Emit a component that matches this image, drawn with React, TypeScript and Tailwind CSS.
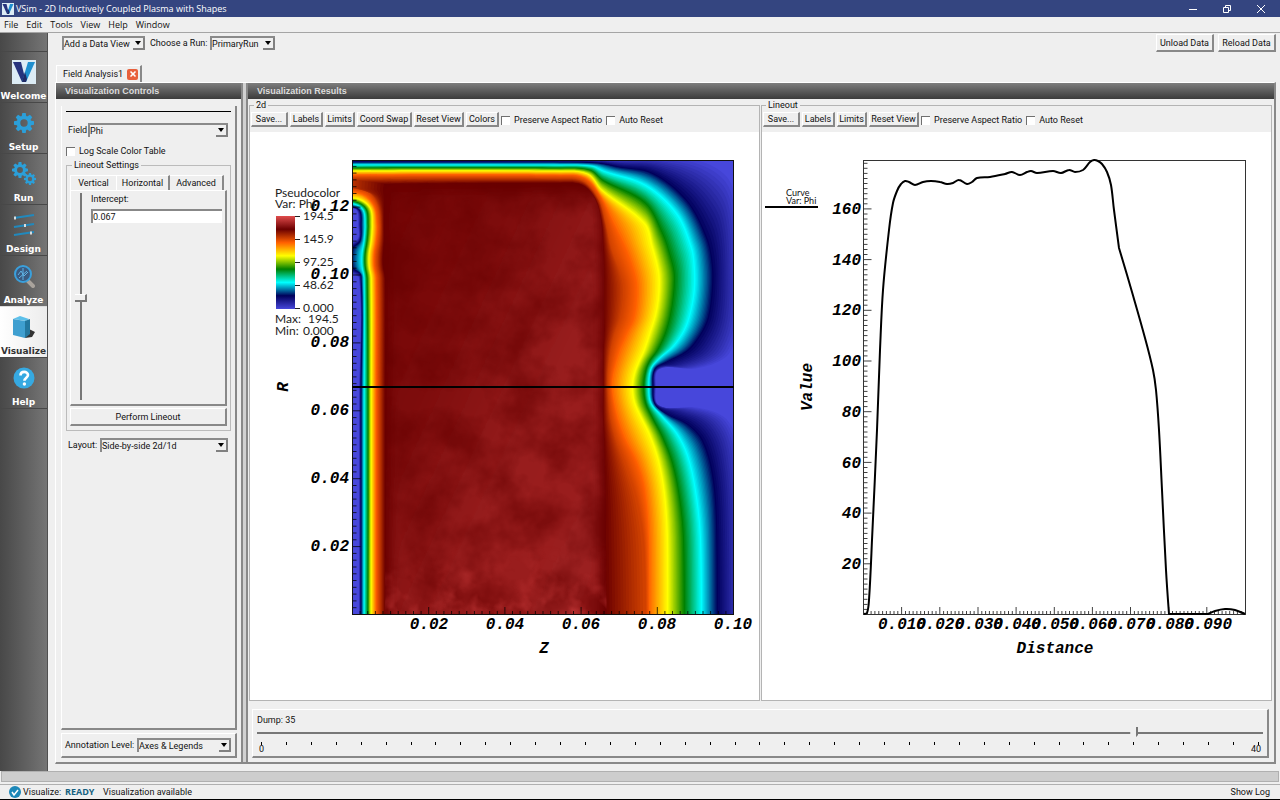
import type { ReactNode } from "react";
import clsx from "clsx";
import { X } from "lucide-react";

type Point = [number, number];
type Rgb = [number, number, number];

/* "hot desaturated" colour table */
const COLOR_TABLE: Rgb[] = [
  [71, 71, 219],
  [0, 0, 91],
  [0, 255, 255],
  [0, 128, 0],
  [255, 255, 0],
  [255, 96, 0],
  [107, 0, 0],
  [224, 76, 76],
];

function colorAt(value: number) {
  const position = value * (COLOR_TABLE.length - 1);
  const index = Math.min(Math.floor(position), COLOR_TABLE.length - 2);
  const t = position - index;
  const rgb = COLOR_TABLE[index].map((c, i) =>
    Math.round(c + (COLOR_TABLE[index + 1][i] - c) * t),
  );
  return `rgb(${rgb.join(",")})`;
}

/* Isolines of Phi, all with the same number of points so they can be blended */
const CONTOURS: { value: number; points: Point[] }[] = [
  {
    value: 0,
    points: [
      [340, 160], [560, 160], [600, 159], [620, 158], [660, 156], [700, 158], [728, 172], [738, 200],
      [742, 280], [742, 315], [738, 340], [728, 358], [698, 369], [660, 369], [656, 387], [660, 406],
      [698, 407], [726, 416], [738, 436], [742, 470], [744, 520], [744, 640],
      [359, 640], [359, 400], [359, 279], [347, 271], [347, 246], [358, 238], [358, 225], [357, 211],
      [352, 208], [340, 208],
    ],
  },
  {
    value: 1 / 7,
    points: [
      [340, 162], [560, 162], [598, 163], [620, 167], [653, 173], [687, 200], [707, 237], [713, 265],
      [713, 290], [709, 318], [701, 335], [688, 351], [667, 362], [655, 369], [653, 387], [655, 404],
      [667, 414], [688, 424], [703, 440], [713, 473], [717, 520], [718, 640],
      [361, 640], [361, 400], [361, 275], [352, 267], [352, 249], [360, 241], [361, 225], [360, 211],
      [353, 207], [340, 207],
    ],
  },
  {
    value: 2 / 7,
    points: [
      [340, 165], [560, 165], [592, 166], [604, 171], [646, 185], [677, 213], [692, 247], [695, 268],
      [695, 290], [691, 313], [685, 330], [674, 346], [660, 358], [651, 369], [649, 387], [651, 403],
      [662, 416], [677, 433], [688, 455], [696, 490], [701, 537], [702, 640],
      [364, 640], [364, 400], [364, 278], [362, 266], [362, 254], [364, 241], [365, 225], [363, 210],
      [354, 204], [340, 204],
    ],
  },
  {
    value: 3 / 7,
    points: [
      [340, 168], [560, 168], [590, 170], [603, 180], [645, 202], [663, 233], [672, 260], [675, 275],
      [674, 295], [671, 315], [666, 333], [658, 350], [650, 361], [646, 371], [644, 387], [646, 403],
      [653, 418], [663, 437], [673, 463], [680, 497], [684, 537], [685, 640],
      [368, 640], [368, 400], [367, 278], [365, 266], [365, 254], [367, 241], [368, 225], [366, 209],
      [356, 202], [340, 201],
    ],
  },
  {
    value: 4 / 7,
    points: [
      [340, 171], [560, 171], [588, 174], [602, 190], [645, 223], [653, 247], [659, 270], [660, 283],
      [659, 300], [656, 316], [651, 332], [645, 350], [639, 363], [635, 374], [633, 387], [635, 402],
      [641, 416], [650, 434], [659, 460], [665, 493], [668, 537], [668, 640],
      [371, 640], [371, 400], [371, 278], [369, 266], [369, 254], [371, 241], [372, 225], [370, 208],
      [358, 199], [340, 198],
    ],
  },
  {
    value: 5 / 7,
    points: [
      [340, 175], [560, 175], [585, 178], [601, 197], [614, 223], [626, 248], [634, 270], [637, 283],
      [637, 300], [634, 319], [627, 334], [620, 350], [616, 363], [613, 375], [612, 387], [614, 402],
      [618, 419], [625, 438], [637, 462], [645, 490], [649, 537], [649, 640],
      [376, 640], [376, 400], [376, 278], [374, 266], [374, 254], [376, 241], [377, 225], [374, 206],
      [362, 194], [340, 192],
    ],
  },
  {
    value: 0.76,
    points: [
      [340, 178], [560, 178], [583, 181], [599, 200], [606, 224], [612, 250], [620, 270], [624, 284],
      [624, 300], [621, 318], [615, 334], [611, 350], [609, 363], [608, 375], [608, 387], [609, 402],
      [611, 419], [616, 438], [626, 465], [637, 500], [644, 545], [646, 640],
      [379, 640], [379, 400], [379, 278], [377, 266], [377, 254], [379, 241], [380, 225], [377, 204],
      [366, 191], [340, 187],
    ],
  },
  {
    value: 6 / 7,
    points: [
      [384, 184], [560, 183], [582, 185], [595, 199], [601, 220], [603, 245], [604, 268], [604, 285],
      [604, 300], [604, 318], [604, 334], [603, 350], [603, 363], [603, 375], [603, 387], [603, 402],
      [603, 419], [604, 438], [605, 465], [606, 500], [606, 545], [607, 640],
      [385, 640], [385, 400], [385, 278], [383, 266], [383, 254], [384, 241], [384, 225], [384, 210],
      [384, 200], [383, 190],
    ],
  },
];

/* Points where an isoline leaves the plot */
const CONTOUR_CORNERS = [0, 21, 22, 31];

const LINEOUT: Point[] = [
  [864, 614], [867, 613], [869, 600], [872, 540], [877, 430], [880, 350], [883, 290], [889, 230],
  [893, 203], [897, 191], [901, 184], [905, 181], [909, 182], [915, 185], [923, 182], [931, 181],
  [940, 182], [947, 184], [953, 183], [959, 180], [967, 184], [972, 182], [977, 178], [990, 177],
  [1005, 174], [1012, 172], [1020, 175], [1027, 172], [1031, 171], [1037, 173], [1053, 171],
  [1061, 173], [1069, 170], [1075, 172], [1083, 170], [1090, 162], [1094, 160], [1098, 161],
  [1102, 164], [1107, 172], [1111, 185], [1114, 210], [1119, 248], [1132, 292], [1145, 338],
  [1153, 370], [1156, 390], [1159, 430], [1162, 490], [1166, 570], [1169, 614], [1208, 614],
  [1215, 611], [1225, 609], [1235, 610], [1245, 614],
];

const LINEOUT_CORNERS = [1119, 1169, 1208].map((x) => LINEOUT.findIndex((p) => p[0] === x));

function smoothPath(points: Point[], closed: boolean, corners: number[]) {
  const n = points.length;
  const at = (i: number) =>
    closed ? points[(i + n) % n] : points[Math.max(0, Math.min(n - 1, i))];
  const tangent = (i: number): Point => {
    if (corners.includes(i)) return [0, 0];
    const [ax, ay] = at(i - 1);
    const [bx, by] = at(i + 1);
    const length = Math.hypot(bx - ax, by - ay) || 1;
    return [(bx - ax) / length, (by - ay) / length];
  };

  let d = `M${points[0].join(" ")}`;
  for (let i = 0; i < (closed ? n : n - 1); i++) {
    const [px, py] = at(i);
    const [qx, qy] = at(i + 1);
    const reach = Math.hypot(qx - px, qy - py) / 3;
    const [tx, ty] = tangent(i);
    const [ux, uy] = tangent(closed ? (i + 1) % n : i + 1);
    const nums = [px + tx * reach, py + ty * reach, qx - ux * reach, qy - uy * reach, qx, qy];
    d += `C${nums.map((v) => v.toFixed(1)).join(" ")}`;
  }
  return closed ? `${d}Z` : d;
}

const STEPS = 14;

const BANDS = CONTOURS.slice(0, -1).flatMap((from, i) => {
  const to = CONTOURS[i + 1];
  return Array.from({ length: STEPS }, (_, s) => {
    const t = (s + 1) / STEPS;
    const points = from.points.map(([x, y], k): Point => [
      x + (to.points[k][0] - x) * t,
      y + (to.points[k][1] - y) * t,
    ]);
    return {
      d: smoothPath(points, true, CONTOUR_CORNERS),
      fill: colorAt(from.value + (to.value - from.value) * t),
    };
  });
});

const CORE = BANDS[BANDS.length - 1].d;

function ticks(count: number, horizontal: boolean, origin: number, step: number) {
  let d = "";
  for (let i = 1; i <= count; i++) {
    const size = i % 10 === 0 ? 8 : 4;
    d += horizontal
      ? `M${(origin + i * step).toFixed(1)} 615v${-size}`
      : `M${origin} ${(614.5 - i * step).toFixed(1)}h${size}`;
  }
  return d;
}

const axisText = "font-['Liberation_Mono',monospace] text-[16px] font-bold italic";

function FieldPlot() {
  return (
    <svg viewBox="250 132 509 568" className="block h-auto w-full" role="img" aria-label="Phi pseudocolor plot">
      <defs>
        <clipPath id="plot-area">
          <rect x="352" y="160" width="382" height="455" />
        </clipPath>
        <clipPath id="plasma-core">
          <path d={CORE} />
        </clipPath>
        <linearGradient id="color-bar" x1="0" y1="1" x2="0" y2="0">
          {COLOR_TABLE.map((_, i) => (
            <stop key={i} offset={i / 7} stopColor={colorAt(i / 7)} />
          ))}
        </linearGradient>
        <linearGradient id="core-glow" x1="0" y1="0" x2="1" y2="1">
          <stop offset="0" stopColor="#e04c4c" stopOpacity="0.06" />
          <stop offset="0.3" stopColor="#e04c4c" stopOpacity="0.16" />
          <stop offset="0.6" stopColor="#e04c4c" stopOpacity="0.38" />
          <stop offset="1" stopColor="#e04c4c" stopOpacity="0.42" />
        </linearGradient>
        <linearGradient id="speckle-fade" x1="0" y1="0" x2="0" y2="1">
          <stop offset="0" stopColor="#fff" stopOpacity="0" />
          <stop offset="1" stopColor="#fff" stopOpacity="1" />
        </linearGradient>
        <filter id="soft" x="-10%" y="-10%" width="120%" height="120%">
          <feGaussianBlur stdDeviation="5" />
        </filter>
        <filter id="mottle" colorInterpolationFilters="sRGB">
          <feTurbulence type="fractalNoise" baseFrequency="0.024" numOctaves="4" seed="8" />
          <feColorMatrix values="0 0 0 0 0.4  0 0 0 0 0  0 0 0 0 0  2.4 0 0 0 -0.85" />
          <feComposite in2="SourceGraphic" operator="in" />
        </filter>
        <filter id="speckle" colorInterpolationFilters="sRGB">
          <feTurbulence type="fractalNoise" baseFrequency="0.05" numOctaves="3" seed="3" />
          <feColorMatrix values="0 0 0 0 0.86  0 0 0 0 0.28  0 0 0 0 0.28  2.6 0 0 0 -1.2" />
          <feComposite in2="SourceGraphic" operator="in" />
        </filter>
      </defs>

      <g clipPath="url(#plot-area)">
        <rect x="352" y="160" width="382" height="455" fill={colorAt(0)} />
        {BANDS.map((band, i) => (
          <path key={i} d={band.d} fill={band.fill} />
        ))}
        <g clipPath="url(#plasma-core)">
          <rect x="391" y="192" width="209" height="450" fill="url(#core-glow)" filter="url(#soft)" />
          <rect x="380" y="180" width="232" height="440" fill="#fff" filter="url(#mottle)" opacity="0.55" />
          <rect x="380" y="545" width="232" height="75" fill="url(#speckle-fade)" filter="url(#speckle)" opacity="0.5" />
        </g>
      </g>

      <path
        d={ticks(50, true, 352.5, 7.62) + ticks(66, false, 352.5, 6.79)}
        stroke="#000"
        strokeOpacity="0.75"
        fill="none"
      />
      <rect x="352.5" y="160.5" width="381" height="454" fill="none" stroke="#111" />
      <path d="M352 387H734" stroke="#000" strokeWidth="2" />

      <g className={axisText}>
        {["0.02", "0.04", "0.06", "0.08", "0.10", "0.12"].map((label, i) => (
          <text key={label} x="349" y={551 - i * 68} textAnchor="end">
            {label}
          </text>
        ))}
        {["0.02", "0.04", "0.06", "0.08", "0.10"].map((label, i) => (
          <text key={label} x={429 + i * 76} y="629" textAnchor="middle">
            {label}
          </text>
        ))}
        <text x="544" y="653" textAnchor="middle">Z</text>
        <text transform="translate(288 387) rotate(-90)" textAnchor="middle">R</text>
      </g>

      <g className="font-['Lato',sans-serif] text-[12px]" fill="#222">
        <text x="275" y="197">Pseudocolor</text>
        <text x="275" y="208">Var: Phi</text>
        <rect x="276" y="216" width="19" height="93" fill="url(#color-bar)" />
        <path d="M295 216.5h5M295 239.5h5M295 262.5h5M295 285.5h5M295 308.5h5" stroke="#222" />
        {["194.5", "145.9", "97.25", "48.62", "0.000"].map((label, i) => (
          <text key={label} x="303" y={220 + i * 23}>
            {label}
          </text>
        ))}
        <text x="275" y="323">Max:</text>
        <text x="308" y="323">194.5</text>
        <text x="275" y="335">Min:</text>
        <text x="303" y="335">0.000</text>
      </g>
    </svg>
  );
}

function LineoutPlot() {
  return (
    <svg viewBox="762 132 509 568" className="block h-auto w-full" role="img" aria-label="Phi lineout curve">
      <path
        d={ticks(99, true, 863.5, 3.815) + ticks(89, false, 863.5, 5.07)}
        stroke="#000"
        strokeOpacity="0.75"
        fill="none"
      />
      <rect x="863.5" y="160.5" width="382" height="454" fill="none" stroke="#333" />
      <path
        d={smoothPath(LINEOUT, false, LINEOUT_CORNERS)}
        fill="none"
        stroke="#000"
        strokeWidth="2"
        strokeLinejoin="round"
      />

      <g className={axisText}>
        {[20, 40, 60, 80, 100, 120, 140, 160].map((label, i) => (
          <text key={label} x="861" y={569 - Math.round(i * 50.7)} textAnchor="end">
            {label}
          </text>
        ))}
        {[1, 2, 3, 4, 5, 6, 7, 8, 9].map((n) => (
          <text key={n} x={864 + Math.round(n * 38.2)} y="629" textAnchor="middle">
            {`0.0${n}0`}
          </text>
        ))}
        <text x="1055" y="653" textAnchor="middle">Distance</text>
        <text transform="translate(812 387) rotate(-90)" textAnchor="middle">Value</text>
      </g>

      <g className="font-['Lato',sans-serif] text-[9px]" fill="#111">
        <text x="786" y="196">Curve</text>
        <text x="786" y="204">Var: Phi</text>
      </g>
      <path d="M765 207H818" stroke="#000" strokeWidth="2" />
    </svg>
  );
}

function Gear({ cx, cy, r }: { cx: number; cy: number; r: number }) {
  return (
    <g transform={`translate(${cx} ${cy})`} fill="#2b9fd9">
      {[0, 45, 90, 135, 180, 225, 270, 315].map((angle) => (
        <path
          key={angle}
          transform={`rotate(${angle})`}
          d={`M${-r * 0.24} ${-r * 0.6}L${-r * 0.17} ${-r}H${r * 0.17}L${r * 0.24} ${-r * 0.6}Z`}
        />
      ))}
      <circle r={r * 0.55} fill="none" stroke="#2b9fd9" strokeWidth={r * 0.36} />
    </g>
  );
}

function VLogo({ className }: { className: string }) {
  return (
    <svg viewBox="0 0 24 24" className={className} aria-hidden="true">
      <rect width="24" height="24" fill="#dcecf5" />
      <path d="M1 2h8l5 20h-4z" fill="#26337d" />
      <path d="M23 2h-7l-6 20h4z" fill="#1e8fcf" />
      <path d="M10 22l3-10 2 7-1 3z" fill="#202a66" />
    </svg>
  );
}

const navItems: { label: string; icon: ReactNode; active?: boolean }[] = [
  { label: "Welcome", icon: <VLogo className="size-6" /> },
  {
    label: "Setup",
    icon: (
      <svg viewBox="0 0 24 24" className="size-6">
        <Gear cx={12} cy={12} r={10} />
      </svg>
    ),
  },
  {
    label: "Run",
    icon: (
      <svg viewBox="0 0 24 24" className="size-6">
        <Gear cx={8} cy={8} r={8} />
        <Gear cx={18} cy={17} r={6} />
      </svg>
    ),
  },
  {
    label: "Design",
    icon: (
      <svg viewBox="0 0 24 24" className="size-6" stroke="#2189bd" strokeWidth="2">
        <path d="M2 5l20-3M2 14l20-3M2 22l20-3" />
        <path d="M2 5h2M12 12.500h2M18 20h2" stroke="#d7dde0" strokeWidth="3" />
      </svg>
    ),
  },
  {
    label: "Analyze",
    icon: (
      <svg viewBox="0 0 24 24" className="size-6">
        <path d="M15 16l6 6" stroke="#a9a39c" strokeWidth="4" strokeLinecap="round" />
        <circle cx="11" cy="10" r="8" fill="#3b5a80" stroke="#3aa0dc" strokeWidth="2" />
        <path d="M6 11l3-4 3 5 4-4M7 14l8-7M11 4v12" stroke="#5fb3e6" strokeWidth="1" fill="none" />
      </svg>
    ),
  },
  {
    label: "Visualize",
    active: true,
    icon: (
      <svg viewBox="0 0 24 24" className="size-6">
        <path d="M13 23l7-1 3-5-6-3z" fill="#333" />
        <path d="M1 4l7-3 9 3-3 2z" fill="#5cc0ea" />
        <path d="M1 4l12 2v17L1 20z" fill="#3f9fd0" />
        <path d="M13 6l5-2v15l-5 4z" fill="#23779f" />
      </svg>
    ),
  },
  {
    label: "Help",
    icon: (
      <svg viewBox="0 0 24 24" className="size-6">
        <circle cx="12" cy="12" r="10.500" fill="#36a9e1" />
        <path
          d="M8.500 9.500c0-5 7.500-4.500 7.500-.5 0 2.600-3.600 2.800-3.600 5.800"
          fill="none"
          stroke="#fff"
          strokeWidth="2.600"
        />
        <circle cx="12.400" cy="18" r="1.700" fill="#fff" />
      </svg>
    ),
  },
];

function Sidebar() {
  return (
    <nav className="w-12 shrink-0 border-r border-[#505050] bg-linear-to-r from-[#484848] to-[#757575] pt-[18px]">
      {navItems.map(({ label, icon, active }) => (
        <button
          key={label}
          type="button"
          className={clsx(
            "flex h-[51px] w-full flex-col items-center border-t pt-2 font-['DejaVu_Sans',sans-serif] text-[9px] leading-3 font-bold",
            active
              ? "border-[#ddd] bg-linear-to-r from-white to-[#ececec] text-[#333]"
              : "border-[#484848] text-white",
          )}
        >
          {icon}
          <span className="mt-[6px]">{label}</span>
        </button>
      ))}
      <div className="border-t border-[#484848]" />
    </nav>
  );
}

function Select({ id, value, className }: { id: string; value: string; className: string }) {
  return (
    <span className={clsx("relative flex h-[14px]", className)}>
      <select
        id={id}
        aria-label={value}
        defaultValue={value}
        className="w-full appearance-none border-t-2 border-l-2 border-[#8a8a8a] bg-[#efefef] leading-3 outline-none"
      >
        <option>{value}</option>
      </select>
      <span className="pointer-events-none absolute top-[2px] right-0 bottom-0 flex w-3 items-center justify-center border-r-2 border-b-2 border-[#808080]">
        <svg viewBox="0 0 6 4" className="h-1 w-[6px]">
          <path d="M0 0h6L3 4z" fill="#000" />
        </svg>
      </span>
    </span>
  );
}

function PushButton({ children, className }: { children: ReactNode; className?: string }) {
  return (
    <button
      type="button"
      className={clsx(
        "border-t border-r-2 border-b-2 border-l border-t-white border-r-[#888] border-b-[#888] border-l-white bg-[#efefef] text-center leading-3 whitespace-nowrap",
        className,
      )}
    >
      {children}
    </button>
  );
}

function CheckBox({ id, label }: { id: string; label: string }) {
  return (
    <span className="flex items-center gap-1">
      <input
        id={id}
        type="checkbox"
        className="size-[9px] appearance-none border-t border-l border-[#707070] bg-white checked:bg-gray-500"
      />
      <label htmlFor={id} className="whitespace-nowrap">
        {label}
      </label>
    </span>
  );
}

function PanelHeader({ children }: { children: ReactNode }) {
  return (
    <h2 className="h-4 bg-linear-to-b from-[#7e7e7e] to-[#3c3c3c] pl-[9px] font-['Liberation_Sans',sans-serif] text-[9px] leading-4 font-bold text-[#dcdcdc]">
      {children}
    </h2>
  );
}

function ControlsPanel() {
  return (
    <section className="flex w-[185px] shrink-0 flex-col">
      <PanelHeader>Visualization Controls</PanelHeader>
      <div className="mt-[7px] ml-[5px] flex w-44 flex-1 flex-col border-r-2 border-b-2 border-l border-r-[#888] border-b-[#888] border-l-white px-1">
        <hr className="mt-[5px] border-black" />
        <div className="mt-[11px] flex items-center pl-[2px]">
          <label htmlFor="field" className="w-5">Field</label>
          <Select id="field" value="Phi" className="w-[140px]" />
        </div>
        <div className="mt-2">
          <CheckBox id="log-scale" label="Log Scale Color Table" />
        </div>

        <fieldset className="mt-[2px] border border-[#bbb] px-[3px] pb-1">
          <legend className="ml-[2px] px-[2px] leading-3">Lineout Settings</legend>
          <div role="tablist" className="mt-1 flex h-[15px] items-stretch">
            <button type="button" role="tab" aria-selected="false" className="w-[46px] border-t border-l border-white">
              Vertical
            </button>
            <button
              type="button"
              role="tab"
              aria-selected="true"
              className="w-[54px] border-t border-r-2 border-l border-t-white border-r-[#888] border-l-white"
            >
              Horizontal
            </button>
            <button
              type="button"
              role="tab"
              aria-selected="false"
              className="w-[54px] border-t border-r-2 border-t-white border-r-[#888]"
            >
              Advanced
            </button>
          </div>
          <div className="flex h-[216px] gap-1 border-t border-r-2 border-b-2 border-l border-t-white border-r-[#888] border-b-[#888] border-l-white pt-[2px] pl-1">
            <input
              type="range"
              aria-label="Intercept position"
              min="0"
              max="100"
              defaultValue="51"
              className="h-[207px] w-3 appearance-none bg-[linear-gradient(to_right,transparent_5px,#777_5px,#777_7px,transparent_7px)] [writing-mode:vertical-lr] [&::-webkit-slider-thumb]:h-2 [&::-webkit-slider-thumb]:w-3 [&::-webkit-slider-thumb]:appearance-none [&::-webkit-slider-thumb]:border-t [&::-webkit-slider-thumb]:border-r-2 [&::-webkit-slider-thumb]:border-b-2 [&::-webkit-slider-thumb]:border-t-white [&::-webkit-slider-thumb]:border-r-[#777] [&::-webkit-slider-thumb]:border-b-[#777] [&::-webkit-slider-thumb]:bg-[#efefef]"
            />
            <div className="flex flex-col">
              <label htmlFor="intercept" className="leading-3">Intercept:</label>
              <input
                id="intercept"
                defaultValue="0.067"
                className="mt-1 h-[14px] w-[131px] border-t-2 border-l-2 border-[#888] bg-white outline-none"
              />
            </div>
          </div>
          <PushButton className="mt-[2px] h-[18px] w-full">Perform Lineout</PushButton>
        </fieldset>

        <div className="mt-[7px] flex items-center pl-[2px]">
          <label htmlFor="layout" className="w-8">Layout:</label>
          <Select id="layout" value="Side-by-side 2d/1d" className="w-32" />
        </div>
      </div>

      <div className="mt-[3px] mb-1 ml-[5px] flex h-[25px] w-44 items-center justify-between border-t border-r-2 border-b-2 border-l border-t-white border-r-[#888] border-b-[#888] border-l-white pr-1 pl-[3px]">
        <label htmlFor="annotation">Annotation Level:</label>
        <Select id="annotation" value="Axes & Legends" className="w-[94px]" />
      </div>
    </section>
  );
}

function PlotPanel({ id, title, buttons, children }: {
  id: string;
  title: string;
  buttons: { label: string; width: string }[];
  children: ReactNode;
}) {
  return (
    <fieldset className="min-w-0 border border-[#b4b4b4]">
      <legend className="ml-1 h-3 px-[2px] leading-3">{title}</legend>
      <div className="flex h-[21px] items-start gap-[2px] px-px pt-px">
        {buttons.map(({ label, width }) => (
          <PushButton key={label} className={clsx("h-[15px]", width)}>
            {label}
          </PushButton>
        ))}
        <div className="flex h-4 items-center gap-1">
          <CheckBox id={`${id}-aspect`} label="Preserve Aspect Ratio" />
          <CheckBox id={`${id}-auto`} label="Auto Reset" />
        </div>
      </div>
      <div className="bg-white">{children}</div>
    </fieldset>
  );
}

function DumpSlider() {
  return (
    <div className="mt-2 mr-[5px] mb-1 ml-1 h-[49px] border-t border-r-2 border-b-2 border-l border-t-white border-r-[#888] border-b-[#888] border-l-white px-1 pt-1">
      <label htmlFor="dump" className="block leading-3">Dump: 35</label>
      <input
        id="dump"
        type="range"
        min="0"
        max="40"
        defaultValue="35"
        className="mt-px block h-3 w-full appearance-none bg-[linear-gradient(to_bottom,transparent_5px,#777_5px,#777_7px,transparent_7px)] [&::-webkit-slider-thumb]:h-3 [&::-webkit-slider-thumb]:w-2 [&::-webkit-slider-thumb]:appearance-none [&::-webkit-slider-thumb]:border-r-2 [&::-webkit-slider-thumb]:border-r-[#777] [&::-webkit-slider-thumb]:bg-[#efefef] [&::-webkit-slider-thumb]:[clip-path:polygon(0_0,100%_0,100%_65%,50%_100%,0_65%)]"
      />
      <div className="mt-[3px] flex justify-between px-1" aria-hidden="true">
        {Array.from({ length: 41 }, (_, i) => (
          <span key={i} className="h-[3px] w-px bg-black" />
        ))}
      </div>
      <div className="flex justify-between px-[2px] leading-[9px]">
        <span>0</span>
        <span>40</span>
      </div>
    </div>
  );
}

export default function App() {
  return (
    <div className="flex min-h-screen flex-col bg-[#efefef] font-['Roboto',sans-serif] text-[9px] leading-3 text-[#111]">
      <header className="flex h-[17px] items-center bg-[#344580] text-white">
        <VLogo className="mx-[2px] size-3" />
        <h1 className="flex-1 font-['Open_Sans',sans-serif] text-[9px]">
          VSim - 2D Inductively Coupled Plasma with Shapes
        </h1>
        <div className="flex gap-6 pr-[14px]">
          <button type="button" aria-label="Minimize">
            <svg viewBox="0 0 10 10" className="size-[10px]" stroke="#fff"><path d="M1 5.500h8" /></svg>
          </button>
          <button type="button" aria-label="Restore">
            <svg viewBox="0 0 10 10" className="size-[10px]" stroke="#fff" fill="none">
              <path d="M1.500 3.500h5v5h-5zM3.500 3.500v-2h5v5h-2" />
            </svg>
          </button>
          <button type="button" aria-label="Close">
            <svg viewBox="0 0 10 10" className="size-[10px]" stroke="#fff"><path d="M1 1l8 8M9 1l-8 8" /></svg>
          </button>
        </div>
      </header>

      <nav className="flex h-4 items-center gap-2 border-b border-[#a5a5a5] pl-1">
        {["File", "Edit", "Tools", "View", "Help", "Window"].map((item) => (
          <button key={item} type="button" className="font-['Open_Sans',sans-serif]">
            {item}
          </button>
        ))}
      </nav>

      <div className="flex flex-1">
        <Sidebar />
        <main className="flex min-w-0 flex-1 flex-col pb-[7px]">
          <div className="flex h-8 items-start pt-px pr-1 pl-[14px]">
            <div className="mt-[2px] flex items-center">
              <Select id="data-view" value="Add a Data View" className="w-[83px]" />
              <label htmlFor="run" className="w-[59px] pl-[5px] whitespace-nowrap">Choose a Run:</label>
              <Select id="run" value="PrimaryRun" className="ml-[6px] w-[65px]" />
            </div>
            <div className="ml-auto flex gap-1">
              <PushButton className="h-[18px] w-[58px]">Unload Data</PushButton>
              <PushButton className="h-[18px] w-[58px]">Reload Data</PushButton>
            </div>
          </div>

          <div role="tablist" className="ml-2 flex">
            <div className="flex h-[17px] w-[86px] items-center gap-1 border-t border-r-2 border-l border-t-white border-r-[#888] border-l-white pl-[6px]">
              <button type="button" role="tab" aria-selected="true">Field Analysis1</button>
              <button
                type="button"
                aria-label="Close tab"
                className="flex size-[11px] items-center justify-center rounded-xs bg-[#e8603c] text-white"
              >
                <X className="size-2" strokeWidth={5} />
              </button>
            </div>
          </div>

          <div className="mr-1 ml-[7px] flex flex-1 border-t border-r-2 border-b-2 border-l border-t-white border-r-[#888] border-b-[#888] border-l-white">
            <ControlsPanel />
            <div className="w-[7px] shrink-0 border-x-2 border-[#8a8a8a] bg-[#d2d2d2]" />
            <section className="flex min-w-0 flex-1 flex-col">
              <PanelHeader>Visualization Results</PanelHeader>
              <div className="mr-[2px] ml-px grid flex-1 grid-cols-2 gap-px">
                <PlotPanel
                  id="field-plot"
                  title="2d"
                  buttons={[
                    { label: "Save...", width: "w-[37px]" },
                    { label: "Labels", width: "w-[33px]" },
                    { label: "Limits", width: "w-[30px]" },
                    { label: "Coord Swap", width: "w-[55px]" },
                    { label: "Reset View", width: "w-[50px]" },
                    { label: "Colors", width: "w-[33px]" },
                  ]}
                >
                  <FieldPlot />
                </PlotPanel>
                <PlotPanel
                  id="lineout-plot"
                  title="Lineout"
                  buttons={[
                    { label: "Save...", width: "w-[37px]" },
                    { label: "Labels", width: "w-[33px]" },
                    { label: "Limits", width: "w-[30px]" },
                    { label: "Reset View", width: "w-[50px]" },
                  ]}
                >
                  <LineoutPlot />
                </PlotPanel>
              </div>
              <DumpSlider />
            </section>
          </div>
        </main>
      </div>

      <div className="mx-px h-[11px] border border-[#b0b0b0] bg-[#cdcdcd]" />
      <footer className="mt-[2px] flex h-[17px] items-center border-t border-b-2 border-t-[#b0b0b0] border-b-black pr-[10px] pl-[9px]">
        <svg viewBox="0 0 12 12" className="size-3" aria-hidden="true">
          <circle cx="6" cy="6" r="6" fill="#1c87b8" />
          <path d="M3 6l2 3 4-5" fill="none" stroke="#fff" strokeWidth="1.500" />
        </svg>
        <span className="ml-[2px] w-[42px]">Visualize:</span>
        <strong className="w-[38px] font-['Open_Sans',sans-serif] text-[#15607f]">READY</strong>
        <span>Visualization available</span>
        <button type="button" className="ml-auto">Show Log</button>
      </footer>
    </div>
  );
}
